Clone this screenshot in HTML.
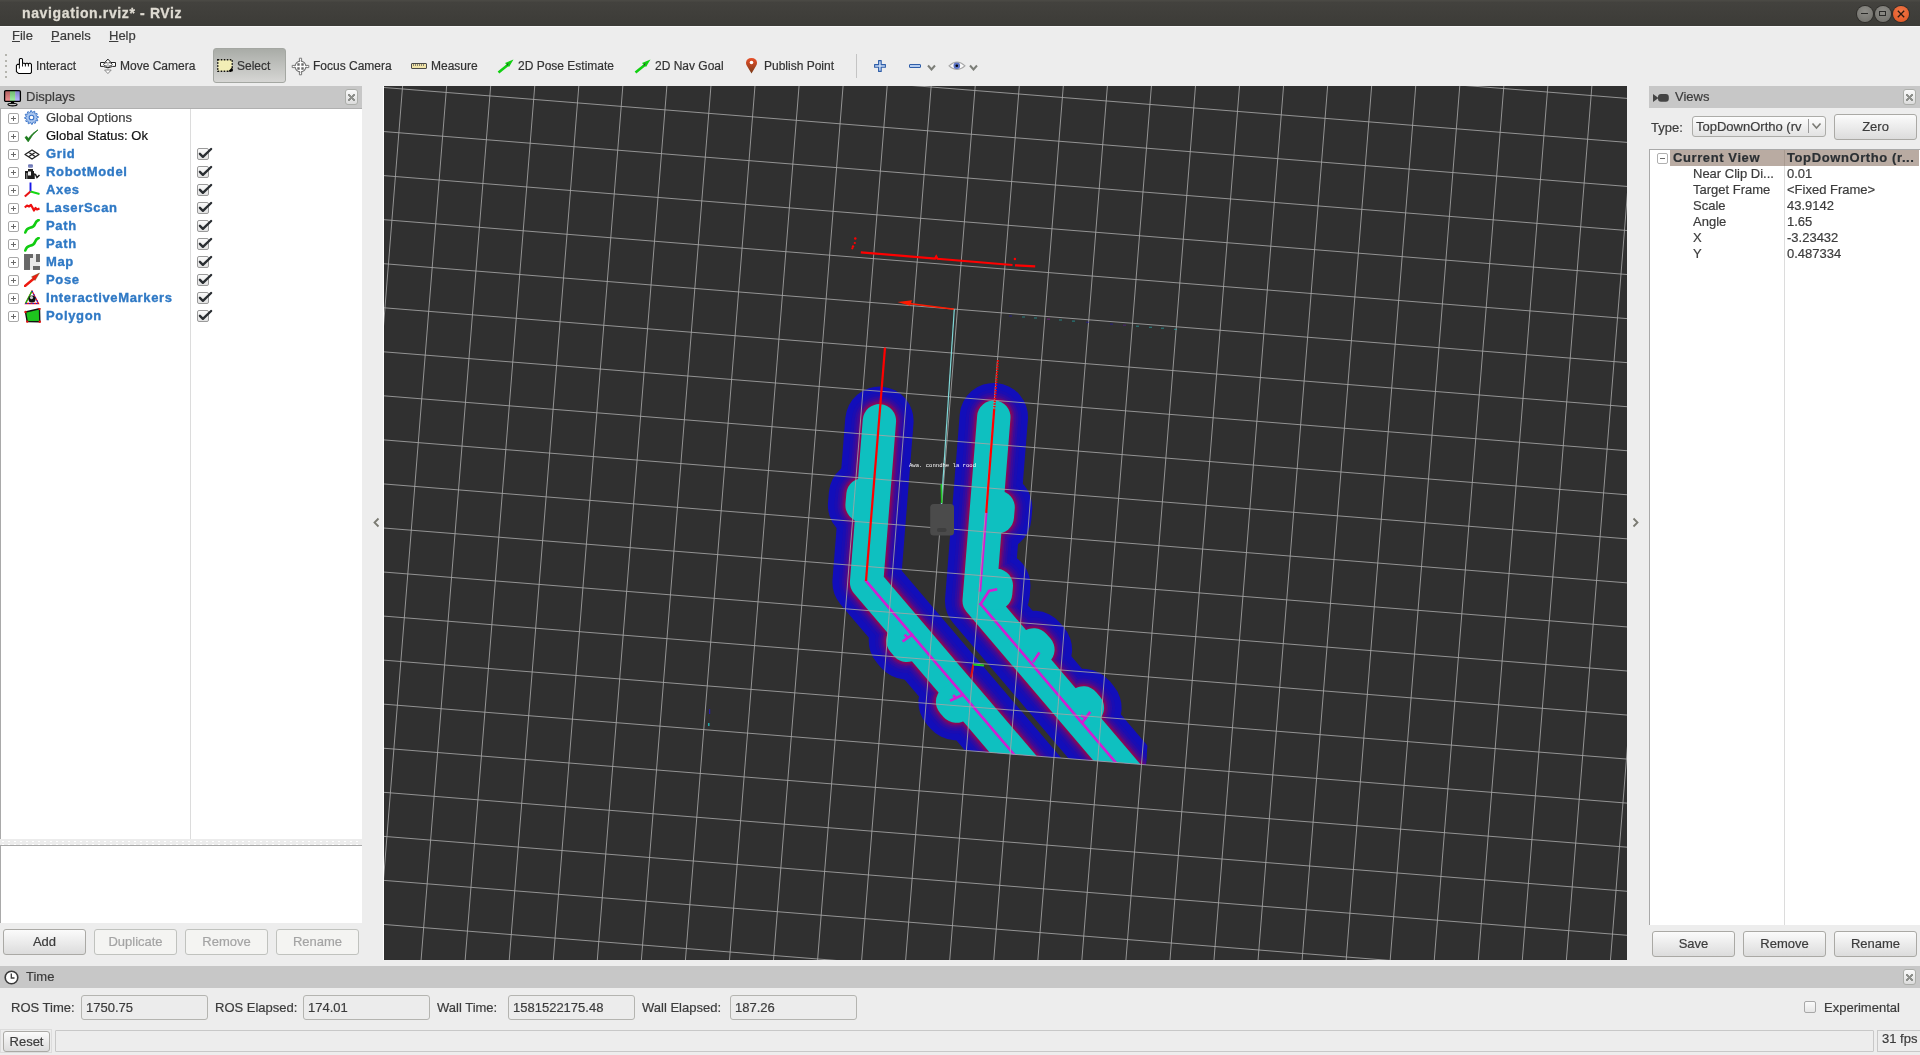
<!DOCTYPE html>
<html><head><meta charset="utf-8">
<style>
*{box-sizing:border-box}
html,body{margin:0;padding:0}
body{width:1920px;height:1055px;overflow:hidden;position:relative;background:#ededed;font-family:"Liberation Sans",sans-serif;color:#3c3c3c}
.a{position:absolute}
#root{-webkit-text-stroke-width:0.2px}
#title .t{-webkit-text-stroke-width:0.3px}
.t{position:absolute;white-space:nowrap;line-height:1}
#title{left:0;top:0;width:1920px;height:26px;background:linear-gradient(#4a4944 0px,#4a4944 1px,#43423e 2px,#3c3b37 26px)}
#title .t{left:22px;top:6px;font-weight:bold;font-size:14px;color:#dfdbd2;letter-spacing:0.63px}
.wb{position:absolute;top:6px;width:16px;height:16px;border-radius:50%;background:radial-gradient(circle at 50% 35%,#8e8d88,#6e6d68);box-shadow:0 0 0 1px #2e2d2a}
.menu{top:29px;font-size:13px;color:#3c3c3c}
.tb{top:60px;font-size:12px;color:#333}
.hdr{background:#c7c7c7}
.hdr .t{font-size:13px;color:#3c3c3c;top:4px!important}
.closeb{position:absolute;width:13px;height:16px;border:1px solid #acaeaa;border-radius:3px;background:linear-gradient(#fafafa,#dcdcdc)}
.closeb:after{content:"";position:absolute;left:2px;top:4px;width:7px;height:7px;background:linear-gradient(45deg,transparent 40%,#8e908c 40%,#8e908c 60%,transparent 60%),linear-gradient(-45deg,transparent 40%,#8e908c 40%,#8e908c 60%,transparent 60%)}
.row{position:absolute;left:0;height:18px;width:362px}
.pm{position:absolute;left:8px;top:4px;width:11px;height:11px;border:1px solid #a8a8a8;border-radius:2px;background:#fff}
.pm:before{content:"";position:absolute;left:2px;top:4px;width:5px;height:1px;background:#6a6a6a}
.pm.p:after{content:"";position:absolute;left:4px;top:2px;width:1px;height:5px;background:#6a6a6a}
.dn{position:absolute;left:46px;top:2px;font-size:13px;line-height:1;white-space:nowrap}
.dn.b{font-weight:bold;color:#2f79c5;letter-spacing:0.65px;-webkit-text-stroke:0.35px #2f79c5}
.cb{position:absolute;left:197px;top:3px;width:12px;height:12px;border:1px solid #9a9a9a;border-radius:2px;background:linear-gradient(#fafafa,#e2e2e2)}
.btn{position:absolute;border:1px solid #aaa9a5;border-radius:3px;background:linear-gradient(#fbfbfb,#dcdcdc);font-size:13px;text-align:center;color:#3c3c3c}
.btn.dis{background:#f4f4f2;border-color:#c0c2be;color:#a4a4a4}
.vr{position:absolute;left:1649px;height:16px;width:271px}
.vr .k{position:absolute;left:44px;top:1px;font-size:13px;line-height:1;white-space:nowrap}
.vr .v{position:absolute;left:138px;top:1px;font-size:13px;line-height:1;white-space:nowrap}
.field{position:absolute;top:995px;height:25px;border:1px solid #b4b4b0;border-radius:3px;background:#ececec}
.field .t{left:4px;top:5px;font-size:13px;color:#3c3c3c}
.lbl{position:absolute;top:1001px;font-size:13px;line-height:1;white-space:nowrap;color:#3c3c3c}
</style></head><body>
<div id="root" style="position:absolute;left:0;top:0;width:1920px;height:1055px;background:#ededed;will-change:transform;overflow:hidden">

<!-- Title bar -->
<div id="title" class="a"><div class="t">navigation.rviz* - RViz</div>
<div class="wb" style="left:1857px;top:5.5px;width:16px;height:16px"><div class="a" style="left:4px;top:7px;width:7px;height:1.5px;background:#2a2a28"></div></div>
<div class="wb" style="left:1875px;top:5.5px;width:16px;height:16px"><div class="a" style="left:4px;top:5px;width:7px;height:5px;border:1.2px solid #2a2a28"></div></div>
<div class="wb" style="left:1893px;top:5.5px;width:16px;height:16px;background:radial-gradient(circle at 50% 35%,#f0784a,#e0521e)"><svg class="a" style="left:0;top:0" width="16" height="16" viewBox="0 0 16 16"><path d="M4.8,4.8 L11.2,11.2 M11.2,4.8 L4.8,11.2" stroke="#2a1a10" stroke-width="1.3"/></svg></div>
</div>
<div class="a" style="left:0;top:26px;width:1920px;height:1px;background:#f7f7f7"></div>

<!-- Menu -->
<div class="t menu" style="left:12px"><u>F</u>ile</div>
<div class="t menu" style="left:51px"><u>P</u>anels</div>
<div class="t menu" style="left:109px"><u>H</u>elp</div>

<!-- Toolbar -->
<div id="toolbar">
<div class="a" style="left:5px;top:54px;width:2px;height:2px;background:#b4b4ae"></div>
<div class="a" style="left:5px;top:60px;width:2px;height:2px;background:#b4b4ae"></div>
<div class="a" style="left:5px;top:65px;width:2px;height:2px;background:#b4b4ae"></div>
<div class="a" style="left:5px;top:71px;width:2px;height:2px;background:#b4b4ae"></div>
<div class="a" style="left:5px;top:76px;width:2px;height:2px;background:#b4b4ae"></div>
<svg class="a" style="left:12px;top:54px" width="24" height="24" viewBox="0 0 24 24"><path d="M7.4,10.35 V5.4 Q7.4,4.4 8.4,4.4 H9.5 Q10.5,4.4 10.5,5.4 V9.3 H12.6 L13.4,10 L14.2,9.3 H15.6 L16.4,10 L17.2,9.3 H18.5 L19.45,10.3 V18.3 L18.5,19.45 H6.5 L4.4,17.6 V11.4 L5.5,10.35 Z" fill="#fff" stroke="#000" stroke-width="1.05" stroke-linejoin="round"/><path d="M7.4,10.35 V14.6 M10.5,9.3 V12.5 M13.4,10 V12.5 M16.4,10 V12.5" stroke="#000" stroke-width="0.9" fill="none"/></svg>
<div class="t tb" style="left:36px">Interact</div>
<svg class="a" style="left:96px;top:54px" width="24" height="24" viewBox="0 0 24 24"><path d="M11.9,16 V8" stroke="#c4c4c4" stroke-width="2"/><path d="M11.9,19.6 L8.6,16 H15.2 Z" fill="#fff" stroke="#8a8a8a" stroke-width="1" stroke-linejoin="round"/><path d="M11.9,5.1 L15,8.5 H19.5 V12.4 H16.5 Q14,13.6 11.9,13.6 Q9.8,13.6 7.3,12.4 H4.5 V8.5 H8.8 Z" fill="#fff" stroke="#222" stroke-width="1" stroke-linejoin="round"/><ellipse cx="11.9" cy="10.4" rx="4.3" ry="1.9" fill="none" stroke="#333" stroke-width="1"/><path d="M11.9,8 V13" stroke="#c4c4c4" stroke-width="2"/></svg>
<div class="t tb" style="left:120px">Move Camera</div>
<div class="a" style="left:213px;top:48px;width:73px;height:35px;border:1px solid #a4a7a2;border-radius:3px;background:linear-gradient(#a9aca7,#d6d6d4)"></div>
<svg class="a" style="left:217px;top:59px" width="16" height="13" viewBox="0 0 16 13"><rect x="0.75" y="0.75" width="14.5" height="11.5" fill="#f2eeb6" stroke="#111" stroke-width="1.5" stroke-dasharray="1.6 1.4"/><path d="M15.5,8 V12.5 H11 Z" fill="#000"/></svg>
<div class="t tb" style="left:237px">Select</div>
<svg class="a" style="left:288px;top:54px" width="24" height="24" viewBox="0 0 24 24"><path d="M11.4,4.2 H13.6 V20.8 H11.4 Z M4.2,11.4 H20.8 V13.6 H4.2 Z" fill="#fff" stroke="#777" stroke-width="1"/><circle cx="12.5" cy="12.5" r="5.4" fill="#fff" stroke="#777" stroke-width="1.1"/><path d="M9.3,9.3 h2.4 v2.4 h-2.4z M13.3,9.3 h2.4 v2.4 h-2.4z M9.3,13.3 h2.4 v2.4 h-2.4z M13.3,13.3 h2.4 v2.4 h-2.4z" fill="#6a6a6a"/><path d="M12.5,6.5 V18.5 M6.5,12.5 H18.5" stroke="#fff" stroke-width="0.9"/></svg>
<div class="t tb" style="left:313px">Focus Camera</div>
<div class="a" style="left:411px;top:63px;width:16px;height:6px;background:#f0e4a8;border:1px solid #4a4a48;border-radius:1px"></div>
<div class="a" style="left:413px;top:64px;width:12px;height:2px;background:repeating-linear-gradient(90deg,#8a8470 0 1px,transparent 1px 2px)"></div>
<div class="t tb" style="left:431px">Measure</div>
<svg class="a" style="left:497px;top:58px" width="18" height="16" viewBox="0 0 18 16"><path d="M1.5,14.5 L12,6" stroke="#11d011" stroke-width="2.6"/><path d="M16.5,1.5 L8,5 L12,9 Z" fill="#11d011"/><path d="M10,7.5 L11,5.5" stroke="#333" stroke-width="1"/></svg>
<div class="t tb" style="left:518px">2D Pose Estimate</div>
<svg class="a" style="left:634px;top:58px" width="18" height="16" viewBox="0 0 18 16"><path d="M1.5,14.5 L12,6" stroke="#11d011" stroke-width="2.6"/><path d="M16.5,1.5 L8,5 L12,9 Z" fill="#11d011"/><path d="M10,7.5 L11,5.5" stroke="#333" stroke-width="1"/></svg>
<div class="t tb" style="left:655px">2D Nav Goal</div>
<svg class="a" style="left:745px;top:57px" width="13" height="17" viewBox="0 0 13 17"><defs><linearGradient id="pin" x1="0" y1="0" x2="0" y2="1"><stop offset="0" stop-color="#e8502a"/><stop offset="1" stop-color="#7a3a18"/></linearGradient></defs><path d="M6.5,16.5 L2,9 Q0.8,7 1,5.5 Q1.5,1 6.5,1 Q11.5,1 12,5.5 Q12.2,7 11,9 Z" fill="url(#pin)"/><circle cx="6.5" cy="5.5" r="1.8" fill="#fff"/></svg>
<div class="t tb" style="left:764px">Publish Point</div>
<div class="a" style="left:856px;top:54px;width:1px;height:24px;background:#c4c4c4"></div>
<svg class="a" style="left:873px;top:59px" width="14" height="14" viewBox="0 0 14 14"><path d="M5.6,1.6 H8.2 V5.6 H12.4 V8.2 H8.2 V12.4 H5.6 V8.2 H1.6 V5.6 H5.6 Z" fill="#c2d6f4" stroke="#2f5ea8" stroke-width="1.1" stroke-linejoin="round"/></svg>
<div class="a" style="left:909px;top:64px;width:12px;height:4px;background:#b4ccf0;border:1px solid #2f5ea8;border-radius:1px"></div>
<svg class="a" style="left:927px;top:63px" width="9" height="8" viewBox="0 0 9 8"><path d="M1,2.5 L4.5,6.5 L8,2.5" fill="none" stroke="#7c7e78" stroke-width="2"/></svg>
<svg class="a" style="left:948px;top:60px" width="18" height="12" viewBox="0 0 18 12"><path d="M1,5.8 Q9,-1.5 17,5.8 Q9,13 1,5.8 Z" fill="#fafafa" stroke="#a8a8a8" stroke-width="1.1"/><circle cx="8.8" cy="5.8" r="3.3" fill="#5a72c4"/><circle cx="8.8" cy="5.8" r="1.3" fill="#000"/></svg>
<svg class="a" style="left:969px;top:63px" width="9" height="8" viewBox="0 0 9 8"><path d="M1,2.5 L4.5,6.5 L8,2.5" fill="none" stroke="#7c7e78" stroke-width="2"/></svg>
</div>

<!-- Displays panel -->
<div class="a hdr" style="left:0;top:86px;width:362px;height:22px"><svg class="a" style="left:3px;top:3px" width="19" height="19" viewBox="0 0 19 19"><defs><linearGradient id="gr" x1="0" y1="0" x2="0" y2="1"><stop offset="0" stop-color="#b06060"/><stop offset="1" stop-color="#f09090"/></linearGradient><linearGradient id="gg" x1="0" y1="0" x2="0" y2="1"><stop offset="0" stop-color="#70b870"/><stop offset="1" stop-color="#a0f0a0"/></linearGradient><linearGradient id="gb" x1="0" y1="0" x2="0" y2="1"><stop offset="0" stop-color="#8080c8"/><stop offset="1" stop-color="#b8b8ff"/></linearGradient></defs><rect x="2" y="2" width="5" height="10" fill="url(#gr)"/><rect x="7" y="2" width="5.3" height="10" fill="url(#gg)"/><rect x="12.3" y="2" width="4.7" height="10" fill="url(#gb)"/><rect x="1.6" y="1.6" width="15.8" height="10.8" rx="1.2" fill="none" stroke="#000" stroke-width="1.3"/><path d="M8.2,12.5 H10.8 L11.5,14.6 H7.5 Z" fill="#000"/><ellipse cx="9.5" cy="15.6" rx="4.6" ry="1.3" fill="none" stroke="#000" stroke-width="1.1"/></svg><div class="t" style="left:26px;top:5px">Displays</div></div>
<div class="closeb" style="left:345px;top:89px"></div>
<div class="a" style="left:0;top:108px;width:362px;height:731px;background:#fff;border-left:1px solid #a9a9a9;border-top:1px solid #b0b0b0"></div>
<div class="a" style="left:190px;top:109px;width:1px;height:730px;background:#dcdcdc"></div>
<div id="dtree"><div class="row" style="top:109px"><div class="pm p"></div><div class="a" style="left:24px;top:1px"><svg width="15" height="15" viewBox="0 0 15 15"><polygon points="14.24,6.62 14.30,7.51 12.65,8.18 12.52,8.85 13.78,10.11 13.39,10.91 11.62,10.67 11.17,11.18 11.63,12.90 10.89,13.39 9.49,12.31 8.84,12.52 8.38,14.24 7.49,14.30 6.82,12.65 6.15,12.52 4.89,13.78 4.09,13.39 4.33,11.62 3.82,11.17 2.10,11.63 1.61,10.89 2.69,9.49 2.48,8.84 0.76,8.38 0.70,7.49 2.35,6.82 2.48,6.15 1.22,4.89 1.61,4.09 3.38,4.33 3.83,3.82 3.37,2.10 4.11,1.61 5.51,2.69 6.16,2.48 6.62,0.76 7.51,0.70 8.18,2.35 8.85,2.48 10.11,1.22 10.91,1.61 10.67,3.38 11.18,3.83 12.90,3.37 13.39,4.11 12.31,5.51 12.52,6.16" fill="#a9c6ef" stroke="#3b74c8" stroke-width="1"/><circle cx="7.5" cy="7.5" r="2.3" fill="#fff" stroke="#3b74c8" stroke-width="1.1"/></svg></div><div class="dn">Global Options</div></div>
<div class="row" style="top:127px"><div class="pm p"></div><div class="a" style="left:24px;top:2px"><svg width="15" height="14" viewBox="0 0 15 14"><path d="M1,8.5 L4.2,12.8 Q8,5.5 14,0.8 Q8.5,3.8 4.2,9.6 L2.6,7.2 Z" fill="#1b7a1b" stroke="#1b7a1b" stroke-width="0.8" stroke-linejoin="round"/></svg></div><div class="dn" style="color:#111">Global Status: Ok</div></div>
<div class="row" style="top:145px"><div class="pm p"></div><div class="a" style="left:24px;top:1px"><svg width="16" height="11" viewBox="0 0 16 11"><path d="M8,1 L15,5.5 L8,10 L1,5.5 Z M4.5,3.25 L11.5,7.75 M11.5,3.25 L4.5,7.75" fill="none" stroke="#222" stroke-width="1.3" stroke-linejoin="round"/></svg></div><div class="dn b">Grid</div><div class="cb"></div><svg class="a" style="left:198px;top:1px" width="15" height="14" viewBox="0 0 15 14"><path d="M1.9,7.8 L4.9,10.8 L13.1,3" fill="none" stroke="#2a2e32" stroke-width="2.4" stroke-linecap="round" stroke-linejoin="round"/></svg></div>
<div class="row" style="top:163px"><div class="pm p"></div><div class="a" style="left:24px;top:1px"><svg width="17" height="16" viewBox="0 0 17 16"><rect x="4" y="0.5" width="5" height="3" rx="1" fill="#2a3a90"/><rect x="4" y="1.6" width="5" height="0.9" fill="#cfd4f0"/><path d="M4,5 H9 V7 H4 Z" fill="#222"/><rect x="1" y="7" width="9" height="8" fill="#1c1c1c"/><rect x="4" y="7.5" width="3" height="4" fill="#f2f2f2"/><rect x="2.2" y="9" width="1.2" height="6" fill="#888"/><path d="M10,15 V11 Q10,9.5 11.5,10.5 L13,13.5 L15.5,11" fill="none" stroke="#1c1c1c" stroke-width="1.5"/></svg></div><div class="dn b">RobotModel</div><div class="cb"></div><svg class="a" style="left:198px;top:1px" width="15" height="14" viewBox="0 0 15 14"><path d="M1.9,7.8 L4.9,10.8 L13.1,3" fill="none" stroke="#2a2e32" stroke-width="2.4" stroke-linecap="round" stroke-linejoin="round"/></svg></div>
<div class="row" style="top:181px"><div class="pm p"></div><div class="a" style="left:24px;top:1px"><svg width="17" height="17" viewBox="0 0 17 17"><path d="M6.5,0.5 V9.5" stroke="#1717e8" stroke-width="1.9"/><path d="M6.5,9.5 L0.8,14.5" stroke="#e81414" stroke-width="2.1"/><path d="M6.5,9.5 L15.5,12" stroke="#14d814" stroke-width="1.9"/></svg></div><div class="dn b">Axes</div><div class="cb"></div><svg class="a" style="left:198px;top:1px" width="15" height="14" viewBox="0 0 15 14"><path d="M1.9,7.8 L4.9,10.8 L13.1,3" fill="none" stroke="#2a2e32" stroke-width="2.4" stroke-linecap="round" stroke-linejoin="round"/></svg></div>
<div class="row" style="top:199px"><div class="pm p"></div><div class="a" style="left:24px;top:2px"><svg width="17" height="14" viewBox="0 0 17 14"><path d="M0.8,6.5 L3,4.5 L5,5.5 L7,4 L9,7.5 L10,9.5 L11.5,7 L13,8.5 L15.5,7.5" fill="none" stroke="#ee1010" stroke-width="2.2" stroke-linejoin="round"/></svg></div><div class="dn b">LaserScan</div><div class="cb"></div><svg class="a" style="left:198px;top:1px" width="15" height="14" viewBox="0 0 15 14"><path d="M1.9,7.8 L4.9,10.8 L13.1,3" fill="none" stroke="#2a2e32" stroke-width="2.4" stroke-linecap="round" stroke-linejoin="round"/></svg></div>
<div class="row" style="top:217px"><div class="pm p"></div><div class="a" style="left:24px;top:2px"><svg width="16" height="15" viewBox="0 0 16 15"><path d="M1.3,13.5 Q2.5,9.5 6,8.8 Q10,8 11,5 Q12,2 14.6,1" fill="none" stroke="#11cc11" stroke-width="2.6" stroke-linecap="round"/></svg></div><div class="dn b">Path</div><div class="cb"></div><svg class="a" style="left:198px;top:1px" width="15" height="14" viewBox="0 0 15 14"><path d="M1.9,7.8 L4.9,10.8 L13.1,3" fill="none" stroke="#2a2e32" stroke-width="2.4" stroke-linecap="round" stroke-linejoin="round"/></svg></div>
<div class="row" style="top:235px"><div class="pm p"></div><div class="a" style="left:24px;top:2px"><svg width="16" height="15" viewBox="0 0 16 15"><path d="M1.3,13.5 Q2.5,9.5 6,8.8 Q10,8 11,5 Q12,2 14.6,1" fill="none" stroke="#11cc11" stroke-width="2.6" stroke-linecap="round"/></svg></div><div class="dn b">Path</div><div class="cb"></div><svg class="a" style="left:198px;top:1px" width="15" height="14" viewBox="0 0 15 14"><path d="M1.9,7.8 L4.9,10.8 L13.1,3" fill="none" stroke="#2a2e32" stroke-width="2.4" stroke-linecap="round" stroke-linejoin="round"/></svg></div>
<div class="row" style="top:253px"><div class="pm p"></div><div class="a" style="left:24px;top:1px"><svg width="16" height="16" viewBox="0 0 16 16"><rect x="0" y="0" width="16" height="16" fill="#f4f4f4"/><path d="M0,0 H9 V4 H0Z M0,4 H6 V16 H0Z M12,0 H16 V8 H12Z M9,12 H16 V16 H9Z" fill="#6e6e6e"/><path d="M0,2 H16 M0,4 H16 M0,6 H16 M0,8 H16 M0,10 H16 M0,12 H16 M0,14 H16 M2,0 V16 M4,0 V16 M6,0 V16 M8,0 V16 M10,0 V16 M12,0 V16 M14,0 V16" stroke="#000" stroke-opacity="0.08" stroke-width="0.5"/></svg></div><div class="dn b">Map</div><div class="cb"></div><svg class="a" style="left:198px;top:1px" width="15" height="14" viewBox="0 0 15 14"><path d="M1.9,7.8 L4.9,10.8 L13.1,3" fill="none" stroke="#2a2e32" stroke-width="2.4" stroke-linecap="round" stroke-linejoin="round"/></svg></div>
<div class="row" style="top:271px"><div class="pm p"></div><div class="a" style="left:24px;top:1px"><svg width="16" height="15" viewBox="0 0 16 15"><path d="M1,14 L10,6.5" stroke="#ee1a10" stroke-width="2.4" stroke-linecap="round"/><path d="M15.5,1 L7.5,4.8 L11,8.5 Z" fill="#ee1a10" stroke="#551" stroke-width="0.4"/></svg></div><div class="dn b">Pose</div><div class="cb"></div><svg class="a" style="left:198px;top:1px" width="15" height="14" viewBox="0 0 15 14"><path d="M1.9,7.8 L4.9,10.8 L13.1,3" fill="none" stroke="#2a2e32" stroke-width="2.4" stroke-linecap="round" stroke-linejoin="round"/></svg></div>
<div class="row" style="top:289px"><div class="pm p"></div><div class="a" style="left:24px;top:1px"><svg width="16" height="16" viewBox="0 0 16 16"><path d="M8,1 L14.5,13.5 H1.5 Z" fill="none" stroke="#e81010" stroke-width="1.3"/><path d="M8,1 L1.5,13.5" stroke="#10c010" stroke-width="1.3"/><path d="M1.5,13.5 H14.5 M8,1 L14.5,13.5" stroke="#1a1ae8" stroke-width="1.1" stroke-dasharray="1.5 2"/><circle cx="8" cy="9" r="3.6" fill="#111"/><circle cx="7.5" cy="7.6" r="1.6" fill="#cfcfcf"/></svg></div><div class="dn b">InteractiveMarkers</div><div class="cb"></div><svg class="a" style="left:198px;top:1px" width="15" height="14" viewBox="0 0 15 14"><path d="M1.9,7.8 L4.9,10.8 L13.1,3" fill="none" stroke="#2a2e32" stroke-width="2.4" stroke-linecap="round" stroke-linejoin="round"/></svg></div>
<div class="row" style="top:307px"><div class="pm p"></div><div class="a" style="left:24px;top:1px"><svg width="17" height="15" viewBox="0 0 17 15"><path d="M1.5,4 L15.5,0.8 L15.8,13.8 L3.2,13.6 Z" fill="#1ec41e" stroke="#111" stroke-width="1.4" stroke-linejoin="round"/><circle cx="1.5" cy="4" r="1.2" fill="#e81010"/><circle cx="15.5" cy="0.8" r="1.2" fill="#e81010"/><circle cx="15.8" cy="13.8" r="1.2" fill="#e81010"/><circle cx="3.2" cy="13.6" r="1.2" fill="#e81010"/></svg></div><div class="dn b">Polygon</div><div class="cb"></div><svg class="a" style="left:198px;top:1px" width="15" height="14" viewBox="0 0 15 14"><path d="M1.9,7.8 L4.9,10.8 L13.1,3" fill="none" stroke="#2a2e32" stroke-width="2.4" stroke-linecap="round" stroke-linejoin="round"/></svg></div></div>
<div class="a" style="left:0;top:839px;width:362px;height:6px;background-color:#ececec;background-image:radial-gradient(circle,#ffffff 0.7px,transparent 1px);background-size:6px 3px;background-position:0 1px"></div>
<div class="a" style="left:0;top:845px;width:362px;height:78px;background:#fff;border-left:1px solid #a9a9a9;border-top:1px solid #a9a9a9"></div>
<div class="btn" style="left:3px;top:929px;width:83px;height:26px;line-height:24px">Add</div>
<div class="btn dis" style="left:94px;top:929px;width:83px;height:26px;line-height:24px">Duplicate</div>
<div class="btn dis" style="left:185px;top:929px;width:83px;height:26px;line-height:24px">Remove</div>
<div class="btn dis" style="left:276px;top:929px;width:83px;height:26px;line-height:24px">Rename</div>

<!-- 3D view -->
<div class="a" style="left:383px;top:86px;width:1px;height:874px;background:#fff"></div>
<div id="view" class="a" style="left:384px;top:86px;width:1243px;height:874px;background:#303030;overflow:hidden"><svg class="a" style="left:0;top:0" width="1243" height="874" viewBox="384 86 1243 874">
<defs><clipPath id="cm"><polygon points="396.9,-396.0 1232.9,-329.5 1145.9,764.8 309.8,698.3"/></clipPath></defs>
<g clip-path="url(#cm)">
<g fill="#120eba" stroke="#120eba" stroke-width="68.4" stroke-linecap="round" stroke-linejoin="round">
<path d="M879.4,420.8 L866.6,582.3 L1068.0,818.6" fill="none"/><path d="M993.8,417.1 L979.2,600.9 L1180.6,837.2" fill="none"/>
<path fill="none" d="M863.0,494.8 L862.1,505.3 M998.1,507.3 L997.3,516.9 M902.9,640.7 L906.9,645.4 M952.6,701.9 L956.3,706.1 M996.3,585.5 L995.6,593.4 M1033.8,644.9 L1037.9,649.6 M1083.4,703.0 L1087.4,707.8"/>
</g>
<g fill="#1a0db2" stroke="#1a0db2" stroke-width="55.4" stroke-linecap="round" stroke-linejoin="round">
<path d="M879.4,420.8 L866.6,582.3 L1068.0,818.6" fill="none"/><path d="M993.8,417.1 L979.2,600.9 L1180.6,837.2" fill="none"/>
<path fill="none" d="M863.0,494.8 L862.1,505.3 M998.1,507.3 L997.3,516.9 M902.9,640.7 L906.9,645.4 M952.6,701.9 L956.3,706.1 M996.3,585.5 L995.6,593.4 M1033.8,644.9 L1037.9,649.6 M1083.4,703.0 L1087.4,707.8"/>
</g>
<g fill="#2a0ca6" stroke="#2a0ca6" stroke-width="49.4" stroke-linecap="round" stroke-linejoin="round">
<path d="M879.4,420.8 L866.6,582.3 L1068.0,818.6" fill="none"/><path d="M993.8,417.1 L979.2,600.9 L1180.6,837.2" fill="none"/>
<path fill="none" d="M863.0,494.8 L862.1,505.3 M998.1,507.3 L997.3,516.9 M902.9,640.7 L906.9,645.4 M952.6,701.9 L956.3,706.1 M996.3,585.5 L995.6,593.4 M1033.8,644.9 L1037.9,649.6 M1083.4,703.0 L1087.4,707.8"/>
</g>
<g fill="#3c0b98" stroke="#3c0b98" stroke-width="45.4" stroke-linecap="round" stroke-linejoin="round">
<path d="M879.4,420.8 L866.6,582.3 L1068.0,818.6" fill="none"/><path d="M993.8,417.1 L979.2,600.9 L1180.6,837.2" fill="none"/>
<path fill="none" d="M863.0,494.8 L862.1,505.3 M998.1,507.3 L997.3,516.9 M902.9,640.7 L906.9,645.4 M952.6,701.9 L956.3,706.1 M996.3,585.5 L995.6,593.4 M1033.8,644.9 L1037.9,649.6 M1083.4,703.0 L1087.4,707.8"/>
</g>
<g fill="#560a84" stroke="#560a84" stroke-width="41.4" stroke-linecap="round" stroke-linejoin="round">
<path d="M879.4,420.8 L866.6,582.3 L1068.0,818.6" fill="none"/><path d="M993.8,417.1 L979.2,600.9 L1180.6,837.2" fill="none"/>
<path fill="none" d="M863.0,494.8 L862.1,505.3 M998.1,507.3 L997.3,516.9 M902.9,640.7 L906.9,645.4 M952.6,701.9 L956.3,706.1 M996.3,585.5 L995.6,593.4 M1033.8,644.9 L1037.9,649.6 M1083.4,703.0 L1087.4,707.8"/>
</g>
<g fill="#72086c" stroke="#72086c" stroke-width="38.4" stroke-linecap="round" stroke-linejoin="round">
<path d="M879.4,420.8 L866.6,582.3 L1068.0,818.6" fill="none"/><path d="M993.8,417.1 L979.2,600.9 L1180.6,837.2" fill="none"/>
<path fill="none" d="M863.0,494.8 L862.1,505.3 M998.1,507.3 L997.3,516.9 M902.9,640.7 L906.9,645.4 M952.6,701.9 L956.3,706.1 M996.3,585.5 L995.6,593.4 M1033.8,644.9 L1037.9,649.6 M1083.4,703.0 L1087.4,707.8"/>
</g>
<g fill="#8c0854" stroke="#8c0854" stroke-width="35.8" stroke-linecap="round" stroke-linejoin="round">
<path d="M879.4,420.8 L866.6,582.3 L1068.0,818.6" fill="none"/><path d="M993.8,417.1 L979.2,600.9 L1180.6,837.2" fill="none"/>
<path fill="none" d="M863.0,494.8 L862.1,505.3 M998.1,507.3 L997.3,516.9 M902.9,640.7 L906.9,645.4 M952.6,701.9 L956.3,706.1 M996.3,585.5 L995.6,593.4 M1033.8,644.9 L1037.9,649.6 M1083.4,703.0 L1087.4,707.8"/>
</g>
<g fill="#0ec0c0" stroke="#0ec0c0" stroke-width="33.4" stroke-linecap="round" stroke-linejoin="round">
<path d="M879.4,420.8 L866.6,582.3 L1068.0,818.6" fill="none"/><path d="M993.8,417.1 L979.2,600.9 L1180.6,837.2" fill="none"/>
<path fill="none" d="M863.0,494.8 L862.1,505.3 M998.1,507.3 L997.3,516.9 M902.9,640.7 L906.9,645.4 M952.6,701.9 L956.3,706.1 M996.3,585.5 L995.6,593.4 M1033.8,644.9 L1037.9,649.6 M1083.4,703.0 L1087.4,707.8"/>
</g>
<g stroke="#d21ed2" stroke-width="2.6" fill="none" stroke-linecap="square">
<path d="M866.0,580.9 L1067.5,817.2"/>
<path d="M986.2,512.9 L980.0,590.4"/>
<path d="M980.7,604.1 L1182.1,840.4"/>
<path d="M912,634.7 L903.6,640.7 M907.5,637.7 L905.5,635.5 M962.3,695 L951.2,700.2 M956,698 L954,696 M980.7,604 L989,591 L996,589.5 M1033.6,661.1 L1038.7,653.5 M1082.7,722 L1089.5,712.9 M1086,717.5 L1082,716"/>
</g>
</g>
<path d="M-374.0,-1778.8 L-652.7,1722.9 M-374.0,-1778.8 L3127.7,-1500.1 M-330.3,-1775.3 L-608.9,1726.4 M-377.5,-1735.0 L3124.2,-1456.4 M-286.5,-1771.8 L-565.2,1729.9 M-381.0,-1691.3 L3120.7,-1412.6 M-242.7,-1768.3 L-521.4,1733.4 M-384.5,-1647.5 L3117.2,-1368.8 M-198.9,-1764.9 L-477.6,1736.9 M-388.0,-1603.7 L3113.8,-1325.0 M-155.2,-1761.4 L-433.8,1740.3 M-391.4,-1559.9 L3110.3,-1281.3 M-111.4,-1757.9 L-390.1,1743.8 M-394.9,-1516.2 L3106.8,-1237.5 M-67.6,-1754.4 L-346.3,1747.3 M-398.4,-1472.4 L3103.3,-1193.7 M-23.9,-1750.9 L-302.5,1750.8 M-401.9,-1428.6 L3099.8,-1150.0 M19.9,-1747.4 L-258.8,1754.3 M-405.4,-1384.9 L3096.3,-1106.2 M63.7,-1744.0 L-215.0,1757.8 M-408.9,-1341.1 L3092.9,-1062.4 M107.5,-1740.5 L-171.2,1761.2 M-412.3,-1297.3 L3089.4,-1018.6 M151.2,-1737.0 L-127.4,1764.7 M-415.8,-1253.5 L3085.9,-974.9 M195.0,-1733.5 L-83.7,1768.2 M-419.3,-1209.8 L3082.4,-931.1 M238.8,-1730.0 L-39.9,1771.7 M-422.8,-1166.0 L3078.9,-887.3 M282.5,-1726.5 L3.9,1775.2 M-426.3,-1122.2 L3075.4,-843.6 M326.3,-1723.1 L47.6,1778.7 M-429.8,-1078.5 L3072.0,-799.8 M370.1,-1719.6 L91.4,1782.1 M-433.2,-1034.7 L3068.5,-756.0 M413.9,-1716.1 L135.2,1785.6 M-436.7,-990.9 L3065.0,-712.2 M457.6,-1712.6 L179.0,1789.1 M-440.2,-947.1 L3061.5,-668.5 M501.4,-1709.1 L222.7,1792.6 M-443.7,-903.4 L3058.0,-624.7 M545.2,-1705.6 L266.5,1796.1 M-447.2,-859.6 L3054.5,-580.9 M588.9,-1702.2 L310.3,1799.6 M-450.7,-815.8 L3051.1,-537.2 M632.7,-1698.7 L354.0,1803.0 M-454.1,-772.1 L3047.6,-493.4 M676.5,-1695.2 L397.8,1806.5 M-457.6,-728.3 L3044.1,-449.6 M720.3,-1691.7 L441.6,1810.0 M-461.1,-684.5 L3040.6,-405.8 M764.0,-1688.2 L485.4,1813.5 M-464.6,-640.7 L3037.1,-362.1 M807.8,-1684.7 L529.1,1817.0 M-468.1,-597.0 L3033.6,-318.3 M851.6,-1681.3 L572.9,1820.5 M-471.6,-553.2 L3030.2,-274.5 M895.3,-1677.8 L616.7,1823.9 M-475.0,-509.4 L3026.7,-230.8 M939.1,-1674.3 L660.5,1827.4 M-478.5,-465.6 L3023.2,-187.0 M982.9,-1670.8 L704.2,1830.9 M-482.0,-421.9 L3019.7,-143.2 M1026.7,-1667.3 L748.0,1834.4 M-485.5,-378.1 L3016.2,-99.4 M1070.4,-1663.8 L791.8,1837.9 M-489.0,-334.3 L3012.7,-55.7 M1114.2,-1660.4 L835.5,1841.4 M-492.5,-290.6 L3009.3,-11.9 M1158.0,-1656.9 L879.3,1844.8 M-495.9,-246.8 L3005.8,31.9 M1201.7,-1653.4 L923.1,1848.3 M-499.4,-203.0 L3002.3,75.6 M1245.5,-1649.9 L966.9,1851.8 M-502.9,-159.2 L2998.8,119.4 M1289.3,-1646.4 L1010.6,1855.3 M-506.4,-115.5 L2995.3,163.2 M1333.1,-1642.9 L1054.4,1858.8 M-509.9,-71.7 L2991.8,207.0 M1376.8,-1639.5 L1098.2,1862.3 M-513.4,-27.9 L2988.4,250.7 M1420.6,-1636.0 L1141.9,1865.7 M-516.8,15.8 L2984.9,294.5 M1464.4,-1632.5 L1185.7,1869.2 M-520.3,59.6 L2981.4,338.3 M1508.1,-1629.0 L1229.5,1872.7 M-523.8,103.4 L2977.9,382.0 M1551.9,-1625.5 L1273.3,1876.2 M-527.3,147.2 L2974.4,425.8 M1595.7,-1622.0 L1317.0,1879.7 M-530.8,190.9 L2970.9,469.6 M1639.5,-1618.6 L1360.8,1883.2 M-534.3,234.7 L2967.5,513.4 M1683.2,-1615.1 L1404.6,1886.6 M-537.7,278.5 L2964.0,557.1 M1727.0,-1611.6 L1448.3,1890.1 M-541.2,322.2 L2960.5,600.9 M1770.8,-1608.1 L1492.1,1893.6 M-544.7,366.0 L2957.0,644.7 M1814.5,-1604.6 L1535.9,1897.1 M-548.2,409.8 L2953.5,688.4 M1858.3,-1601.1 L1579.7,1900.6 M-551.7,453.6 L2950.0,732.2 M1902.1,-1597.7 L1623.4,1904.1 M-555.2,497.3 L2946.6,776.0 M1945.9,-1594.2 L1667.2,1907.5 M-558.6,541.1 L2943.1,819.8 M1989.6,-1590.7 L1711.0,1911.0 M-562.1,584.9 L2939.6,863.5 M2033.4,-1587.2 L1754.7,1914.5 M-565.6,628.6 L2936.1,907.3 M2077.2,-1583.7 L1798.5,1918.0 M-569.1,672.4 L2932.6,951.1 M2121.0,-1580.2 L1842.3,1921.5 M-572.6,716.2 L2929.1,994.9 M2164.7,-1576.8 L1886.1,1925.0 M-576.1,760.0 L2925.7,1038.6 M2208.5,-1573.3 L1929.8,1928.4 M-579.5,803.7 L2922.2,1082.4 M2252.3,-1569.8 L1973.6,1931.9 M-583.0,847.5 L2918.7,1126.2 M2296.0,-1566.3 L2017.4,1935.4 M-586.5,891.3 L2915.2,1169.9 M2339.8,-1562.8 L2061.1,1938.9 M-590.0,935.0 L2911.7,1213.7 M2383.6,-1559.3 L2104.9,1942.4 M-593.5,978.8 L2908.2,1257.5 M2427.4,-1555.9 L2148.7,1945.9 M-597.0,1022.6 L2904.8,1301.3 M2471.1,-1552.4 L2192.5,1949.3 M-600.4,1066.4 L2901.3,1345.0 M2514.9,-1548.9 L2236.2,1952.8 M-603.9,1110.1 L2897.8,1388.8 M2558.7,-1545.4 L2280.0,1956.3 M-607.4,1153.9 L2894.3,1432.6 M2602.4,-1541.9 L2323.8,1959.8 M-610.9,1197.7 L2890.8,1476.3 M2646.2,-1538.4 L2367.5,1963.3 M-614.4,1241.4 L2887.3,1520.1 M2690.0,-1535.0 L2411.3,1966.8 M-617.9,1285.2 L2883.9,1563.9 M2733.8,-1531.5 L2455.1,1970.2 M-621.3,1329.0 L2880.4,1607.7 M2777.5,-1528.0 L2498.9,1973.7 M-624.8,1372.8 L2876.9,1651.4 M2821.3,-1524.5 L2542.6,1977.2 M-628.3,1416.5 L2873.4,1695.2 M2865.1,-1521.0 L2586.4,1980.7 M-631.8,1460.3 L2869.9,1739.0 M2908.8,-1517.5 L2630.2,1984.2 M-635.3,1504.1 L2866.4,1782.7 M2952.6,-1514.1 L2673.9,1987.7 M-638.8,1547.8 L2863.0,1826.5 M2996.4,-1510.6 L2717.7,1991.1 M-642.2,1591.6 L2859.5,1870.3 M3040.2,-1507.1 L2761.5,1994.6 M-645.7,1635.4 L2856.0,1914.1 M3083.9,-1503.6 L2805.3,1998.1 M-649.2,1679.2 L2852.5,1957.8 M3127.7,-1500.1 L2849.0,2001.6 M-652.7,1722.9 L2849.0,2001.6" stroke="#a4a4a4" stroke-opacity="0.85" stroke-width="1" fill="none"/>
<g stroke="#ff0000" fill="none" stroke-width="2.2">
<path d="M860.8,252.3 L935,258.5 L936.2,256.5 L937.5,258.8 L1012.5,265 M1015,265.3 L1035.2,266.3"/>
<path d="M885.0,347.6 L866.0,580.9"/>
<path d="M998.0,360.2 L994.2,409.2" stroke-dasharray="1.5 1.2"/>
<path d="M994.2,409.2 L986.2,512.9"/>
</g>
<g fill="#ff0000"><circle cx="855.3" cy="238.5" r="1.2"/><circle cx="854.8" cy="243" r="1.1"/><circle cx="853" cy="246.5" r="1.2"/><circle cx="852.3" cy="248.3" r="1.1"/><circle cx="1014.9" cy="259" r="1.2"/></g>
<path d="M954.3,309.2 L909,303.5" stroke="#ff1a00" stroke-width="1.6"/>
<path d="M897.5,302.1 L912,300.3 L910,305.8 Z" fill="#ff1a00"/>
<path d="M954.3,309.2 L941.4,504" stroke="#80d8d8" stroke-width="1.2" fill="none"/>
<path d="M941.3,484 L941.8,503" stroke="#22c022" stroke-width="1.6" fill="none"/>
<rect x="930.2" y="504" width="23.8" height="31.6" rx="3.5" fill="#4b4b4b"/>
<rect x="937" y="528" width="9.5" height="4" rx="1.8" fill="#3e3e3e"/>
<path d="M973.2,664.5 L971.2,677" stroke="#e01010" stroke-width="2"/><path d="M973.2,664.5 L984,665.5" stroke="#20d020" stroke-width="2"/>
<text x="909" y="466.5" font-family="Liberation Mono" font-size="6" fill="#ffffff" textLength="67" lengthAdjust="spacingAndGlyphs">Awa. conndhe la rood</text>
<rect x="1009" y="315.5" width="3" height="1" fill="#2010c0" opacity="0.6"/>
<rect x="1022" y="316.5" width="3" height="1" fill="#20b0b0" opacity="0.6"/>
<rect x="1034" y="317.5" width="3" height="1" fill="#20c0c0" opacity="0.6"/>
<rect x="1047" y="318.6" width="3" height="1" fill="#a010b0" opacity="0.6"/>
<rect x="1059" y="319.5" width="3" height="1" fill="#20b8b8" opacity="0.6"/>
<rect x="1072" y="320.6" width="3" height="1" fill="#20c0c0" opacity="0.6"/>
<rect x="1086" y="321.7" width="3" height="1" fill="#2010c0" opacity="0.6"/>
<rect x="1110" y="323.6" width="3" height="1" fill="#2010c0" opacity="0.6"/>
<rect x="1123" y="324.7" width="3" height="1" fill="#6010a0" opacity="0.6"/>
<rect x="1136" y="325.7" width="3" height="1" fill="#20c0c0" opacity="0.6"/>
<rect x="1149" y="326.8" width="3" height="1" fill="#20c0c0" opacity="0.6"/>
<rect x="1161" y="327.7" width="3" height="1" fill="#20c0c0" opacity="0.6"/>
<rect x="1174" y="328.8" width="3" height="1" fill="#20c0c0" opacity="0.6"/>
<rect x="709" y="709" width="1.2" height="5" fill="#2a1aa8"/><rect x="708" y="723" width="1.5" height="3" fill="#1eaaaa"/>
</svg></div>

<!-- Views panel -->
<div class="a hdr" style="left:1649px;top:86px;width:271px;height:22px"><svg class="a" style="left:4px;top:7px" width="18" height="11" viewBox="0 0 18 11"><path d="M0,1 L5.5,5 L0,9 Z" fill="#444"/><rect x="5" y="1" width="10.8" height="7.8" rx="3" fill="#444"/></svg><div class="t" style="left:26px;top:5px">Views</div></div>
<div class="a" style="left:1649px;top:108px;width:271px;height:0"></div>
<div class="t" style="left:1651px;top:121px;font-size:13px;color:#3c3c3c">Type:</div>
<div class="a" style="left:1692px;top:116px;width:134px;height:21px;border:1px solid #acaca8;border-radius:3px;background:linear-gradient(#fdfdfd,#e2e2e2)"></div>
<div class="t" style="left:1696px;top:120px;font-size:13px;color:#3c3c3c">TopDownOrtho (rv</div>
<div class="a" style="left:1808px;top:119px;width:1px;height:14px;background:#9a9a9a"></div>
<svg class="a" style="left:1811px;top:122px" width="11" height="8" viewBox="0 0 11 8"><path d="M1.5,1.5 L5.5,6 L9.5,1.5" fill="none" stroke="#7a7a74" stroke-width="1.6"/></svg>
<div class="btn" style="left:1834px;top:114px;width:83px;height:26px;line-height:24px">Zero</div>
<div class="a" style="left:1649px;top:149px;width:271px;height:776px;background:#fff;border-left:1px solid #a9a9a9;border-top:1px solid #a9a9a9"></div>
<div class="a" style="left:1784px;top:150px;width:1px;height:775px;background:#dcdcdc"></div>
<div class="a" style="left:1670px;top:150px;width:249px;height:16px;background:#b9aba2"></div>
<div class="a" style="left:1784px;top:150px;width:1px;height:16px;background:#a89a90"></div>
<div class="a" style="left:1657px;top:153px;width:11px;height:11px;border:1px solid #b0b0b0;border-radius:2px;background:#fff"><div class="a" style="left:2px;top:4px;width:5px;height:1px;background:#6a6a6a"></div></div>
<div class="t" style="left:1673px;top:151px;font-size:13px;font-weight:bold;color:#2a2f33;letter-spacing:0.6px">Current View</div>
<div class="t" style="left:1787px;top:151px;font-size:13px;font-weight:bold;color:#2a2f33;letter-spacing:0.6px">TopDownOrtho (r...</div>
<div class="vr" style="top:166px"><div class="k">Near Clip Di...</div><div class="v">0.01</div></div>
<div class="vr" style="top:182px"><div class="k">Target Frame</div><div class="v">&lt;Fixed Frame&gt;</div></div>
<div class="vr" style="top:198px"><div class="k">Scale</div><div class="v">43.9142</div></div>
<div class="vr" style="top:214px"><div class="k">Angle</div><div class="v">1.65</div></div>
<div class="vr" style="top:230px"><div class="k">X</div><div class="v">-3.23432</div></div>
<div class="vr" style="top:246px"><div class="k">Y</div><div class="v">0.487334</div></div>
<div class="btn" style="left:1652px;top:931px;width:83px;height:26px;line-height:24px">Save</div>
<div class="btn" style="left:1743px;top:931px;width:83px;height:26px;line-height:24px">Remove</div>
<div class="btn" style="left:1834px;top:931px;width:83px;height:26px;line-height:24px">Rename</div>
<svg class="a" style="left:1632px;top:517px" width="8" height="11" viewBox="0 0 8 11"><path d="M1.5,1.5 L5.5,5.5 L1.5,9.5" fill="none" stroke="#7a7a72" stroke-width="1.8"/></svg>
<svg class="a" style="left:372px;top:517px" width="8" height="11" viewBox="0 0 8 11"><path d="M6.5,1.5 L2.5,5.5 L6.5,9.5" fill="none" stroke="#7a7a72" stroke-width="1.8"/></svg>

<div class="closeb" style="left:1903px;top:89px"></div>

<!-- Time panel -->
<div class="a hdr" style="left:0;top:966px;width:1920px;height:22px"><div class="t" style="left:26px;top:5px">Time</div></div>
<svg class="a" style="left:4px;top:970px" width="15" height="15" viewBox="0 0 15 15"><circle cx="7.5" cy="7.5" r="6.3" fill="#fff" stroke="#3a3a3a" stroke-width="1.6"/><path d="M7.3,3.5 V8 H10.5" fill="none" stroke="#3a3a3a" stroke-width="1.3"/></svg>
<div class="lbl" style="left:11px">ROS Time:</div>
<div class="field" style="left:81px;width:127px"><div class="t">1750.75</div></div>
<div class="lbl" style="left:215px">ROS Elapsed:</div>
<div class="field" style="left:303px;width:127px"><div class="t">174.01</div></div>
<div class="lbl" style="left:437px">Wall Time:</div>
<div class="field" style="left:508px;width:127px"><div class="t">1581522175.48</div></div>
<div class="lbl" style="left:642px">Wall Elapsed:</div>
<div class="field" style="left:730px;width:127px"><div class="t">187.26</div></div>
<div class="a" style="left:1804px;top:1001px;width:12px;height:12px;border:1px solid #a8a8a8;border-radius:2px;background:linear-gradient(#fafafa,#e6e6e6)"></div>
<div class="lbl" style="left:1824px">Experimental</div>

<div class="closeb" style="left:1903px;top:969px"></div>

<!-- Status bar -->
<div class="a" style="left:0;top:1029px;width:1920px;height:26px;background:#ededed"></div>
<div class="a" style="left:0;top:1029px;width:52px;height:24px;border:1px solid #dcdcdc"></div>
<div class="btn" style="left:3px;top:1031px;width:47px;height:21px;line-height:19px;font-size:13px">Reset</div>
<div class="a" style="left:55px;top:1030px;width:1819px;height:22px;border:1px solid #c8c8c8;border-radius:1px"></div>
<div class="a" style="left:1877px;top:1030px;width:43px;height:22px;border:1px solid #c8c8c8;border-right:none"></div>
<div class="t" style="left:1882px;top:1032px;font-size:13px;color:#3c3c3c">31 fps</div>


</div>
</body></html>
